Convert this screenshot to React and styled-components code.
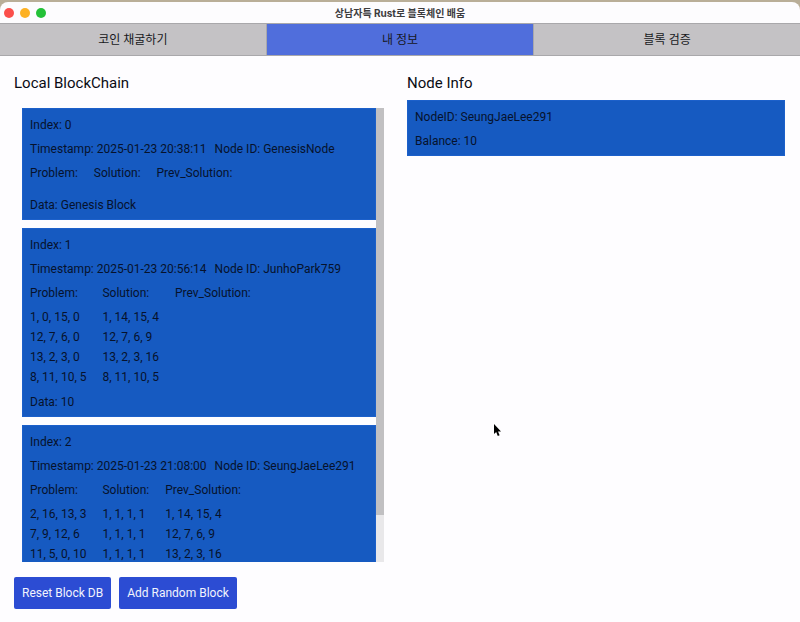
import React, { useEffect, useLayoutEffect, useRef, useState } from "react";
import styled, { createGlobalStyle } from "styled-components";

const GlobalStyle = createGlobalStyle`
  *, *::before, *::after { box-sizing: border-box; }
  body {
    margin: 0;
    background: #b9ae98;
    color: #0a0c14;
    font-family: Roboto, "Noto Sans CJK KR", sans-serif;
    font-size: 12px;
    line-height: 16px;
  }
  h1, h2, p { margin: 0; }
  button { font: inherit; cursor: pointer; }
`;

const Window = styled.div`
  display: flex;
  flex-direction: column;
  height: 100vh;
  padding-top: 2px;
`;

const TitleBar = styled.header`
  display: grid;
  grid-template-columns: 1fr auto 1fr;
  align-items: center;
  height: 21px;
  padding: 0 4px;
  background: #fdfcfe;
  border-radius: 8px 8px 0 0;
  flex-shrink: 0;
`;

const WindowControls = styled.div`
  display: flex;
  gap: 6px;
`;

const WindowControl = styled.button`
  width: 10px;
  height: 10px;
  padding: 0;
  border: 0;
  border-radius: 50%;
  background: ${({ $color }) => $color};
`;

const WindowTitle = styled.h1`
  font-family: Inter, "Noto Sans CJK KR", sans-serif;
  font-size: 10px;
  font-weight: 700;
  line-height: 16px;
  color: #3c3b3d;
`;

const Tabs = styled.nav`
  display: grid;
  grid-template-columns: repeat(3, 1fr);
  flex-shrink: 0;
`;

const Tab = styled.button`
  height: 33px;
  padding: 0;
  border: 1px solid #a9a8ab;
  border-left-width: 0;
  border-right-width: 0;
  background: ${({ $active }) => ($active ? "#506edc" : "#c4c2c5")};
  color: #17181c;
  &:first-child { border-right-width: 1px; }
  &:last-child { border-left-width: 1px; }
`;

const Main = styled.main`
  display: grid;
  grid-template-columns: 1fr 1fr;
  gap: 15px;
  flex: 1;
  min-height: 0;
  padding: 17px 15px 13px 14px;
  background: #fefdff;
`;

const Column = styled.section`
  display: flex;
  flex-direction: column;
  gap: 7px;
  min-width: 0;
  min-height: 0;
`;

const Heading = styled.h2`
  font-size: 15px;
  font-weight: 400;
  line-height: 20px;
`;

const ScrollArea = styled.div`
  display: flex;
  flex: 1;
  min-height: 0;
  margin: 8px;
`;

const BlockList = styled.div`
  display: flex;
  flex-direction: column;
  gap: 8px;
  flex: 1;
  min-width: 0;
  overflow-y: auto;
  scrollbar-width: none;
`;

const ScrollTrack = styled.div`
  width: 8px;
  background: #e9e8ea;
`;

const ScrollThumb = styled.div`
  background: #c1c0c2;
`;

const Card = styled.article`
  display: flex;
  flex-direction: column;
  gap: 8px;
  flex-shrink: 0;
  padding: 9px 8px 7px;
  background: #165ac1;
  color: #06122c;
  box-shadow: inset 0 0 0 1px #1c60ca;
`;

const Line = styled.p`
  display: flex;
  gap: 8px;
  white-space: nowrap;
`;

const Matrix = styled.table`
  align-self: flex-start;
  border-collapse: collapse;
  white-space: nowrap;
`;

const MatrixHead = styled.th`
  padding: 0 16px 8px 0;
  font-weight: 400;
  text-align: left;
`;

const MatrixCell = styled.td`
  padding: 0 16px 4px 0;
  tr:last-child > & { padding-bottom: 1px; }
`;

const Actions = styled.div`
  display: flex;
  gap: 8px;
`;

const ActionButton = styled.button`
  height: 32px;
  padding: 0 8px;
  border: 0;
  border-radius: 2px;
  background: #2c4cd3;
  color: #f2f4fd;
`;

const Cursor = styled.svg`
  position: fixed;
  left: 493px;
  top: 423px;
  width: 9px;
  height: 14px;
  pointer-events: none;
`;

const tabs = ["코인 채굴하기", "내 정보", "블록 검증"];

const blocks = [
  {
    index: 0,
    timestamp: "2025-01-23 20:38:11",
    node: "GenesisNode",
    rows: [],
    data: "Genesis Block",
  },
  {
    index: 1,
    timestamp: "2025-01-23 20:56:14",
    node: "JunhoPark759",
    rows: [
      ["1, 0, 15, 0", "1, 14, 15, 4", ""],
      ["12, 7, 6, 0", "12, 7, 6, 9", ""],
      ["13, 2, 3, 0", "13, 2, 3, 16", ""],
      ["8, 11, 10, 5", "8, 11, 10, 5", ""],
    ],
    data: "10",
  },
  {
    index: 2,
    timestamp: "2025-01-23 21:08:00",
    node: "SeungJaeLee291",
    rows: [
      ["2, 16, 13, 3", "1, 1, 1, 1", "1, 14, 15, 4"],
      ["7, 9, 12, 6", "1, 1, 1, 1", "12, 7, 6, 9"],
      ["11, 5, 0, 10", "1, 1, 1, 1", "13, 2, 3, 16"],
      ["4, 14, 8, 1", "1, 1, 1, 1", "8, 11, 10, 5"],
    ],
    data: "10",
  },
];

function Block({ block }) {
  return (
    <Card>
      <Line>Index: {block.index}</Line>
      <Line>
        <span>Timestamp: {block.timestamp}</span>
        <span>Node ID: {block.node}</span>
      </Line>
      <Matrix>
        <thead>
          <tr>
            <MatrixHead scope="col">Problem:</MatrixHead>
            <MatrixHead scope="col">Solution:</MatrixHead>
            <MatrixHead scope="col">Prev_Solution:</MatrixHead>
          </tr>
        </thead>
        <tbody>
          {block.rows.map((row, r) => (
            <tr key={r}>
              {row.map((cell, c) => (
                <MatrixCell key={c}>{cell}</MatrixCell>
              ))}
            </tr>
          ))}
        </tbody>
      </Matrix>
      <Line>Data: {block.data}</Line>
    </Card>
  );
}

function ScrollingBlocks() {
  const listRef = useRef(null);
  const [thumb, setThumb] = useState({ height: 0, offset: 0 });

  const measure = () => {
    const el = listRef.current;
    if (!el) return;
    const ratio = el.clientHeight / el.scrollHeight;
    setThumb({
      height: Math.round(el.clientHeight * ratio),
      offset: Math.round(el.scrollTop * ratio),
    });
  };

  useLayoutEffect(measure, []);
  useEffect(() => {
    window.addEventListener("resize", measure);
    return () => window.removeEventListener("resize", measure);
  }, []);

  return (
    <ScrollArea>
      <BlockList ref={listRef} onScroll={measure}>
        {blocks.map((block) => (
          <Block key={block.index} block={block} />
        ))}
      </BlockList>
      <ScrollTrack>
        <ScrollThumb style={{ height: thumb.height, marginTop: thumb.offset }} />
      </ScrollTrack>
    </ScrollArea>
  );
}

export default function App() {
  const [active, setActive] = useState(1);
  return (
    <>
      <GlobalStyle />
      <Window>
        <TitleBar>
          <WindowControls>
            <WindowControl $color="#fb4f4b" aria-label="Close" />
            <WindowControl $color="#fdb124" aria-label="Minimize" />
            <WindowControl $color="#24c138" aria-label="Zoom" />
          </WindowControls>
          <WindowTitle>상남자특 Rust로 블록체인 배움</WindowTitle>
        </TitleBar>
        <Tabs>
          {tabs.map((label, i) => (
            <Tab key={label} $active={i === active} onClick={() => setActive(i)}>
              {label}
            </Tab>
          ))}
        </Tabs>
        <Main>
          <Column>
            <Heading>Local BlockChain</Heading>
            <ScrollingBlocks />
            <Actions>
              <ActionButton>Reset Block DB</ActionButton>
              <ActionButton>Add Random Block</ActionButton>
            </Actions>
          </Column>
          <Column>
            <Heading>Node Info</Heading>
            <Card>
              <Line>NodeID: SeungJaeLee291</Line>
              <Line>Balance: 10</Line>
            </Card>
          </Column>
        </Main>
      </Window>
      <Cursor viewBox="0 0 9 14" aria-hidden="true">
        <path
          d="M1 1v10l2.2-2 1.6 4 1.8-.8L5 8.500h3Z"
          fill="#000"
          stroke="#fff"
          strokeWidth="1"
          paintOrder="stroke"
        />
      </Cursor>
    </>
  );
}
